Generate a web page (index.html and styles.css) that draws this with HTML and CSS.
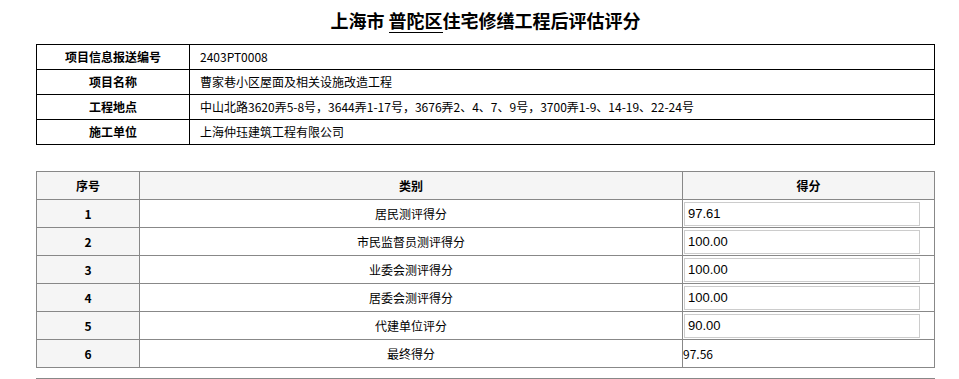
FILE: index.html
```html
<!DOCTYPE html>
<html lang="zh-CN">
<head>
<meta charset="utf-8">
<title>上海市 普陀区住宅修缮工程后评估评分</title>
<link rel="stylesheet" href="styles.css">
</head>
<body>
<div class="page">
  <h1 class="title">上海市 <span class="ul">普陀区</span>住宅修缮工程后评估评分</h1>

  <table class="info">
    <colgroup><col class="c-label"><col class="c-value"></colgroup>
    <tr><th>项目信息报送编号</th><td>2403PT0008</td></tr>
    <tr><th>项目名称</th><td>曹家巷小区屋面及相关设施改造工程</td></tr>
    <tr><th>工程地点</th><td>中山北路3620弄5-8号，3644弄1-17号，3676弄2、4、7、9号，3700弄1-9、14-19、22-24号</td></tr>
    <tr><th>施工单位</th><td>上海仲珏建筑工程有限公司</td></tr>
  </table>

  <table class="score">
    <colgroup><col class="c-no"><col class="c-type"><col class="c-score"></colgroup>
    <tr class="head"><th>序号</th><th>类别</th><th>得分</th></tr>
    <tr><th>1</th><td class="type">居民测评得分</td><td class="val"><input class="inp" type="text" value="97.61"></td></tr>
    <tr><th>2</th><td class="type">市民监督员测评得分</td><td class="val"><input class="inp" type="text" value="100.00"></td></tr>
    <tr><th>3</th><td class="type">业委会测评得分</td><td class="val"><input class="inp" type="text" value="100.00"></td></tr>
    <tr><th>4</th><td class="type">居委会测评得分</td><td class="val"><input class="inp" type="text" value="100.00"></td></tr>
    <tr><th>5</th><td class="type">代建单位评分</td><td class="val"><input class="inp" type="text" value="90.00"></td></tr>
    <tr><th>6</th><td class="type">最终得分</td><td class="val final">97.56</td></tr>
  </table>

  <div class="next"></div>
</div>
</body>
</html>
```

FILE: styles.css
```css
html, body {
  margin: 0;
  padding: 0;
  background: #fff;
}
body {
  font-family: "Noto Sans CJK SC", "Noto Sans", sans-serif;
  font-size: 12px;
  color: #000;
}
.page {
  width: 899px;
  padding-left: 36px;
}
.title {
  margin: 8px 0 11px;
  font-size: 18px;
  line-height: 24px;
  font-weight: bold;
  text-align: center;
}
.title .ul {
  display: inline-block;
  line-height: 24px;
  border-bottom: 1px solid #000;
  vertical-align: top;
}
table {
  width: 899px;
  border-collapse: collapse;
  table-layout: fixed;
}
.info th, .info td {
  border: 1px solid #000;
  height: 24px;
  padding: 0;
  line-height: 16px;
}
.info th {
  font-weight: bold;
  text-align: center;
}
.info td {
  padding-left: 10px;
  text-align: left;
}
.c-label { width: 153px; }
.score {
  margin-top: 26px;
}
.c-no { width: 103px; }
.c-type { width: 543px; }
.score th, .score td {
  border: 1px solid #888;
  height: 27px;
  padding: 0;
  line-height: 16px;
}
.score th {
  background: #f5f5f5;
  font-weight: bold;
  text-align: center;
}
.score td.type {
  text-align: center;
}
.score td.val {
  text-align: left;
  padding-left: 1px;
}
.score td.final {
  padding-left: 0;
}
.inp {
  display: block;
  box-sizing: border-box;
  width: 236px;
  height: 24px;
  margin: 0;
  padding: 0 3px;
  border: 1px solid #ccc;
  font-family: "Liberation Sans", Arial, sans-serif;
  font-size: 13px;
  color: #000;
  background: #fff;
  outline: none;
}
.next {
  margin-top: 10px;
  border-top: 1px solid #888;
  height: 1px;
}
```
